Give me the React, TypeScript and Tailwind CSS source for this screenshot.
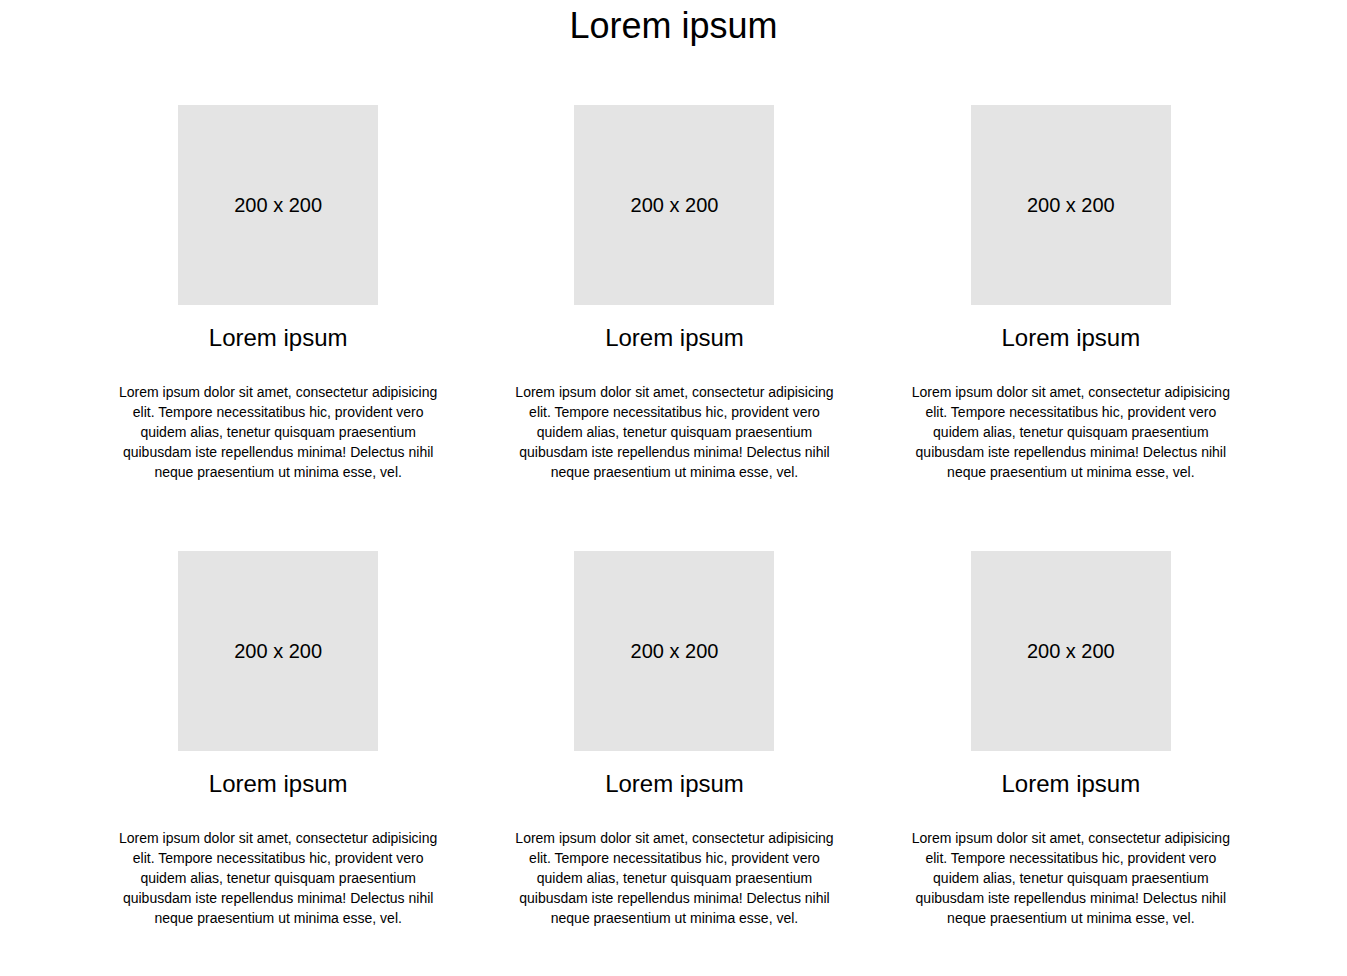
const cards = Array.from({ length: 6 }, (_, i) => i);

const body =
  "Lorem ipsum dolor sit amet, consectetur adipisicing elit. Tempore necessitatibus hic, provident vero quidem alias, tenetur quisquam praesentium quibusdam iste repellendus minima! Delectus nihil neque praesentium ut minima esse, vel.";

function Card() {
  return (
    <div className="flex flex-col items-center">
      {/* placeholder image */}
      <div className="flex h-[200px] w-[200px] items-center justify-center bg-[#e4e4e4] text-[20px] text-black">
        200 x 200
      </div>
      <h2 className="mt-[19px] text-[24px] leading-[28px] text-black">Lorem ipsum</h2>
      <p className="mt-[29.5px] w-[330px] text-center text-[14px] leading-[20px] text-black">{body}</p>
    </div>
  );
}

export default function App() {
  return (
    <main
      className="min-h-screen bg-white pb-10"
      style={{ fontFamily: '"Liberation Sans", Arial, sans-serif' }}
    >
      <h1 className="pt-[6px] text-center text-[36px] leading-[40px] text-black">Lorem ipsum</h1>
      <div className="ml-[80px] mt-[59px] grid w-[1189px] grid-cols-3 gap-y-[69.5px]">
        {cards.map((i) => (
          <Card key={i} />
        ))}
      </div>
    </main>
  );
}
